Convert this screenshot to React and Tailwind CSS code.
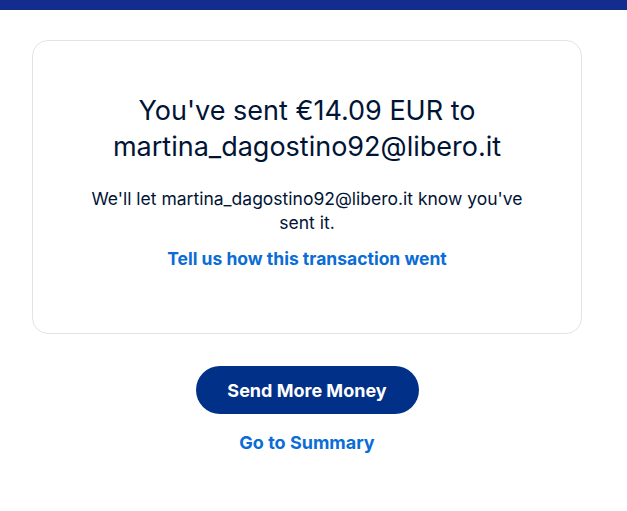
export default function App() {
  return (
    <div className="min-h-[511px] w-full bg-white" style={{ fontFamily: 'Inter, "Noto Sans", sans-serif' }}>
      <div className="h-[10px] w-full bg-[#142c8e]" />
      <div className="w-[614px] pl-[32px] pr-[32px] pt-[30px]">
        <div className="flex h-[294px] w-[550px] flex-col items-center rounded-[16px] border border-[#e3e3e3] px-[30px] pt-[52px] text-center">
          <h1 className="text-[27px] leading-[36px] font-normal text-[#001435]">
            You've sent €14.09 EUR to
            <br />
            martina_dagostino92@libero.it
          </h1>
          <p className="mt-[22px] text-[17.5px] leading-[24px] text-[#001435]">
            We'll let martina_dagostino92@libero.it know you've
            <br />
            sent it.
          </p>
          <a className="mt-[12px] text-[17.5px] leading-[24px] font-bold text-[#0a6cd6]">
            Tell us how this transaction went
          </a>
        </div>
      </div>
      <div className="mt-[32px] flex w-[614px] flex-col items-center">
        <button className="h-[48px] w-[223px] rounded-full bg-[#003087] text-[18px] font-bold text-white">
          Send More Money
        </button>
        <a className="mt-[17px] text-[18px] leading-[24px] font-bold text-[#0a6cd6]">Go to Summary</a>
      </div>
    </div>
  );
}
